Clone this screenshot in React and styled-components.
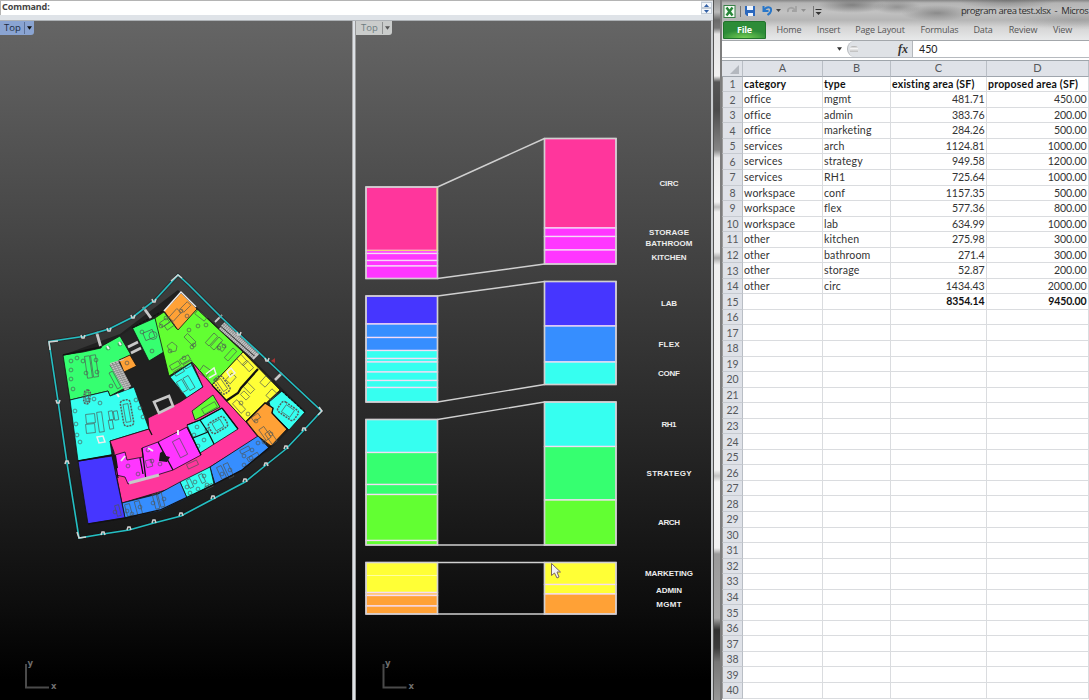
import React from 'react';
import styled, { createGlobalStyle } from 'styled-components';

const Global = createGlobalStyle`
  * { box-sizing: border-box; }
  body { margin: 0; overflow: hidden; background: #000; }
`;

const Desktop = styled.div`
  display: flex;
  width: 1089px;
  height: 700px;
  overflow: hidden;
  font-family: 'Open Sans', sans-serif;
`;

const Modeler = styled.section`
  display: flex;
  flex-direction: column;
  width: 713px;
  flex: none;
  background: #dfe3e8;
`;

const CommandBar = styled.div`
  display: flex;
  justify-content: space-between;
  height: 15px;
  border-top: 1px solid #b4b4b4;
  border-left: 1px solid #b4b4b4;
  background: #fff;
  font: bold 9px/11px 'Noto Sans', sans-serif;
  letter-spacing: -0.1px;
  color: #444;
  padding-left: 1px;
`;

const Spinner = styled.div`
  display: flex;
  flex-direction: column;
  justify-content: space-between;
  width: 12px;
  height: 14px;
  padding: 1px 1px 1px 0;
  background: #e4e8ed;
`;

const SpinButton = styled.div`
  display: flex;
  align-items: center;
  justify-content: center;
  height: 6px;
  border: 1px solid #c3ccd6;
  background: #f3f6fa;
`;

const Viewports = styled.div`
  display: flex;
  flex: 1;
  margin-top: 5px;
  border-top: 1px solid #aeb2b6;
  border-right: 2px solid #c9cccf;
`;

const Viewport = styled.div`
  display: flex;
  flex-direction: column;
  width: ${(p) => p.$width}px;
  height: 679px;
  background: linear-gradient(#656565, #4b4b4b 26%, #2e2e2e 54%, #0e0e0e 85%, #000 97%);
`;

const Splitter = styled.div`
  width: 4px;
  border-left: 1px solid #aaa;
  border-right: 1px solid #9a9a9a;
  background: #dde1e6;
`;

const ViewTab = styled.div`
  display: flex;
  align-items: center;
  justify-content: space-between;
  width: ${(p) => p.$width}px;
  height: 14px;
  flex: none;
  padding: 0 2px 0 ${(p) => (p.$active ? 4 : 5)}px;
  border-radius: 0 0 3px 0;
  background: ${(p) => (p.$active ? '#8aa4d2' : '#cacccb')};
  color: ${(p) => (p.$active ? '#1c2c42' : '#6d7c80')};
  font: 9.5px/14px 'Open Sans', sans-serif;
`;

const TabArrow = styled.span`
  display: flex;
  align-items: center;
  height: 12px;
  padding-left: 2px;
  border-left: 1px solid ${(p) => (p.$active ? '#5d7298' : '#8f9191')};
`;

const Canvas = styled.svg`
  display: block;
  flex: none;
`;

const Gap = styled.div`
  width: 9px;
  flex: none;
  border-left: 1px solid #555;
  border-right: 2px solid #7d7d7d;
  background: linear-gradient(
    #999 0, #bbb 12px, #6a6a6a 20px, #777 28px, #e4e4e4 34px, #f1f1f1 76px,
    #555 82px, #4b4b4b 110px, #868686 150px, #e9e9e9 158px, #f3f3f3 202px,
    #bdbdbd 207px, #f0f0f0 212px, #eee 252px, #a8a8a8 258px, #f0f0f0 265px,
    #f2f2f2 470px, #c2c2c2 476px, #f4f4f4 482px, #f2f2f2 548px, #9a9a9a 554px,
    #a9a9a9 618px, #303030 630px, #3c3c3c 648px, #777 662px, #999 700px
  );
`;

const Workbook = styled.section`
  display: flex;
  flex-direction: column;
  flex: 1;
  min-width: 0;
  background: #fff;
`;

const Frost = styled.div`
  display: flex;
  flex-direction: column;
  height: 40px;
  flex: none;
  background:
    radial-gradient(ellipse 34px 8px at 130px 5px, #666a 0, #6660 100%),
    radial-gradient(ellipse 24px 7px at 175px 7px, #6667 0, #6660 100%),
    radial-gradient(ellipse 36px 8px at 215px 13px, #6669 0, #6660 100%),
    radial-gradient(ellipse 50px 9px at 285px 0px, #6668 0, #6660 100%),
    radial-gradient(ellipse 70px 10px at 355px 20px, #8886 0, #8880 100%),
    linear-gradient(#858585 0, #b4b4b4 3px, #c2c2c2 12px, #b5b5b5 20px, #d4d4d4 27px, #e8e9ea 40px);
`;

const TitleRow = styled.div`
  display: flex;
  align-items: center;
  height: 21px;
  padding-left: 1px;
`;

const Title = styled.span`
  margin-left: auto;
  width: 128px;
  flex: none;
  white-space: nowrap;
  font: 9.5px/20px 'Open Sans', sans-serif;
  color: #2d2d2d;
  letter-spacing: -0.44px;
`;

const RibbonTabs = styled.div`
  display: flex;
  height: 19px;
  align-items: stretch;
`;

const FileTab = styled.div`
  width: 43px;
  margin-left: 1px;
  height: 18px;
  border-radius: 2px 2px 0 0;
  border: 1px solid #20742b;
  background: radial-gradient(ellipse 24px 8px at 50% 100%, #75cf55, #2d8c38 100%);
  color: #fff;
  font: bold 9px/16px 'Open Sans', sans-serif;
  letter-spacing: -0.2px;
  text-align: center;
`;

const RibbonTab = styled.div`
  width: ${(p) => p.$width}px;
  text-align: center;
  white-space: nowrap;
  font: 9px/18px 'Open Sans', sans-serif;
  letter-spacing: -0.14px;
  color: #555;
`;

const FormulaBar = styled.div`
  display: flex;
  height: 18px;
  flex: none;
  border-top: 1px solid #a3a7ab;
  border-bottom: 1px solid #b6babf;
  background: #fff;
`;

const NameBox = styled.div`
  display: flex;
  align-items: center;
  justify-content: flex-end;
  width: 125px;
  padding-right: 5px;
`;

const FunctionArea = styled.div`
  display: flex;
  align-items: center;
  justify-content: space-between;
  width: 66px;
  padding: 0 4px 0 2px;
  border: 1px solid #b4b8bc;
  border-width: 0 1px 0 1px;
  border-radius: 9px 0 0 9px;
  background: #dfe2e6;
  font: italic bold 12px/14px 'Liberation Serif', serif;
  color: #333;
`;

const Knob = styled.span`
  width: 8px;
  height: 6px;
  border-radius: 3px 3px 0 0;
  background: linear-gradient(#aaa, #f6f6f6 40%, #bbb);
`;

const FormulaValue = styled.div`
  padding-left: 6px;
  font: 10.6px/16px 'Lato', sans-serif;
  color: #222;
`;

const Sheet = styled.div`
  display: grid;
  grid-template-columns: 21px 80px 68px 96px 102px;
  grid-template-rows: 15.7px repeat(40, 15.55px);
  margin-top: 2px;
  border-top: 1px solid #9fa5ab;
  width: 367px;
  background: #fff;
`;

const HeadCell = styled.div`
  display: flex;
  align-items: center;
  justify-content: center;
  border-right: 1px solid #b9bec5;
  border-bottom: 1px solid ${(p) => (p.$row ? '#c6cad0' : '#9fa5ad')};
  border-left: ${(p) => (p.$row ? '1px solid #9b9b9b' : '0')};
  background: #dfe2e8;
  color: #55585c;
  font: ${(p) => (p.$row ? 10.5 : 11)}px/14px 'Lato', sans-serif;
`;

const Cell = styled.div`
  min-width: 0;
  overflow: visible;
  white-space: nowrap;
  padding: 0 ${(p) => (p.$number ? 1.5 : 0)}px 0 1px;
  border-right: 1px solid #dadcdf;
  border-bottom: 1px solid #dadcdf;
  text-align: ${(p) => (p.$number ? 'right' : 'left')};
  font: ${(p) => (p.$bold ? 'bold 10.5px' : '10.6px')}/${(p) => (p.$bold ? 15 : 14)}px 'Lato', sans-serif;
  letter-spacing: ${(p) => (p.$number ? -0.1 : p.$bold ? 0.2 : 0.15)}px;
  color: ${(p) => (p.$bold ? '#111' : '#333')};
`;

const ROWS = [
  ['category', 'type', 'existing area (SF)', 'proposed area (SF)'],
  ['office', 'mgmt', '481.71', '450.00'],
  ['office', 'admin', '383.76', '200.00'],
  ['office', 'marketing', '284.26', '500.00'],
  ['services', 'arch', '1124.81', '1000.00'],
  ['services', 'strategy', '949.58', '1200.00'],
  ['services', 'RH1', '725.64', '1000.00'],
  ['workspace', 'conf', '1157.35', '500.00'],
  ['workspace', 'flex', '577.36', '800.00'],
  ['workspace', 'lab', '634.99', '1000.00'],
  ['other', 'kitchen', '275.98', '300.00'],
  ['other', 'bathroom', '271.4', '300.00'],
  ['other', 'storage', '52.87', '200.00'],
  ['other', 'circ', '1434.43', '2000.00'],
  ['', '', '8354.14', '9450.00'],
];

const C = {
  pink: '#ff369c', magenta: '#ff36ff', indigo: '#4636ff', blue: '#368eff',
  cyan: '#36fff0', green: '#36ff70', lime: '#62ff32', yellow: '#ffff36', orange: '#ffa136',
};

const ROOMS = [
  [C.green, '63,355 83,352 101,348 102,346 120,336 131,355 110,365 125,388 110,396 108,391 70,400'],
  [C.cyan, '70,400 108,391 110,396 134,387 149,429 110,441 112,455 78,461'],
  [C.green, '132.5,328 155,318 167,350 149,361'],
  [C.lime, '155,318 164,312 177,329 197,309 243,352 212,385 192,362 169,376'],
  [C.orange, '164,311 181,293 197,309 178,330'],
  [C.orange, '119,360 130,355 136.5,366 124,372'],
  [C.cyan, '170,377 191,363 203,387 187,398'],
  [C.pink, '192,362 212,385 246,422 258,437 210,467 176,487 122,503 117,478 114,452 110,441 149,429 148,418 180,402 203,387'],
  [C.yellow, '243,352 280,390 246,422 212,385'],
  [C.cyan, '282,391 305,412 289,430 272,413 269,402'],
  [C.orange, '246,421 265,402.5 273,408 272,413 287,429 271,446 258,436'],
  [C.blue, '258,436 269,448 242,470 215,484 210,467'],
  [C.cyan, '180,482 210,467 214,484 187,498'],
  [C.blue, '122,503 158,494 180,482 187,498 160,511 125,518'],
  [C.indigo, '78,461 112,456 125,518 88,524'],
  [C.magenta, '115,455 125,452 127,460 143,457 142,448 158,442 187,427 201,455 173,470 128,484 125,477 116,475'],
  [C.cyan, '187,425 200,420 222,408 238,429 200,453 193,438'],
  [C.lime, '192,411 213,395 220,407 195,420'],
];

/* x, y, width, height, rotation of desks and tables */
const DESKS = [
  [86, 356, 5, 22, -8], [92, 355, 5, 22, -8], [113, 371, 4, 18, -28],
  [86, 414, 9, 9, -6], [86, 424, 9, 9, -6], [98, 412, 5, 20, -8], [109, 411, 4, 9, -10], [114, 411, 4, 9, -10], [109, 420, 4, 9, -10],
  [144, 331, 10, 8, -22], [160, 320, 9, 5, -35], [165, 323, 9, 5, -35],
  [170, 363, 10, 5, -30], [180, 357, 10, 5, -30], [174, 369, 10, 5, -30], [184, 362, 9, 5, -30],
  [195, 313, 12, 5, 38], [184, 337, 12, 5, 45], [209, 333, 5, 13, 42], [214, 337, 5, 13, 42], [228, 348, 5, 13, 42],
  [200, 367, 9, 9, 35], [218, 344, 7, 6, 40], [183, 302, 5, 10, 45], [172, 309, 6, 12, 42],
  [239, 355, 6, 10, -42], [245, 361, 6, 10, -42], [228, 374, 6, 9, 42], [262, 377, 7, 9, 42], [268, 390, 7, 9, 42], [244, 385, 10, 6, 45],
  [236, 400, 6, 13, -42], [241, 393, 8, 5, 45], [262, 427, 6, 13, -35], [268, 431, 6, 13, -35], [252, 415, 8, 5, -35],
  [176, 439, 8, 18, -27], [186, 376, 6, 14, -30], [179, 380, 6, 12, -30], [187, 462, 11, 5, -25], [146, 460, 6, 7, -15],
  [202, 405, 15, 6, -30], [240, 448, 10, 4, -28], [247, 455, 12, 4, -30], [226, 463, 5, 15, -25], [219, 466, 5, 13, -25],
  [126, 504, 5, 12, -15], [136, 501, 5, 14, -15], [154, 494, 4, 15, -15], [159, 492, 4, 15, -15], [116, 505, 4, 11, -15],
  [188, 479, 4, 9, -25], [200, 474, 4, 9, -25], [205, 485, 8, 3, -25],
];

const CHAIRS = [
  [71, 361], [77, 358], [83, 361], [96, 360], [71, 370], [71, 379], [73, 389], [86, 373], [97, 372], [111, 386], [108, 348], [120, 344],
  [142, 332], [152, 351], [161, 326], [166, 318], [170, 351], [184, 358], [192, 347], [181, 311], [187, 316], [127, 363],
  [189, 330], [198, 326], [206, 325], [219, 348], [224, 346], [194, 345], [241, 403], [248, 414], [256, 421], [271, 434], [264, 442],
  [75, 411], [76, 424], [77, 435], [80, 442], [88, 400], [94, 399], [100, 403], [136, 400], [140, 408], [143, 417],
  [128, 466], [138, 474], [152, 461], [148, 450], [160, 464], [207, 430], [197, 427], [204, 440], [198, 446], [194, 435],
  [187, 487], [195, 482], [204, 476], [190, 493], [198, 489], [207, 485], [222, 474], [230, 470], [244, 456], [252, 450], [258, 443], [244, 465], [251, 458],
  [115, 512], [127, 511], [140, 507], [153, 503], [164, 499], [132, 514],
];

const TABLES = [[127, 413, 5, 13, -10], [87, 397, 3, 7, 5], [222, 385, 5, 9, -35], [218, 425, 9, 6, -30], [288, 411, 10, 6, 35]];
const POSTS = [[83, 336], [109, 329], [133, 316], [154, 300], [58, 401], [67, 463], [103, 534], [129, 529], [154, 522], [181, 515], [213, 498], [245, 481], [266, 465], [286, 448], [304, 430], [239, 333], [267, 359]];

const OUTLINE = 'M49 341.5L83 336.5L109 329L133 317L155 300L178 275L189 285L221 317L239 334L282 374L321.5 411L304 430L286 449L266 465L245 482L213 499L181 516L154 523L129 530L103 534L79 538L67 463L58 401Z';

function Axis({ x }) {
  return (
    <g fill="#6f6f6f" fontFamily="DejaVu Sans" fontWeight="bold" fontSize="8.5">
      <path d={`M${x} 664v23.500h23`} fill="none" stroke="#4a4a4a" strokeWidth="2" />
      <text x={x + 1.5} y="666">y</text>
      <text x={x + 25} y="689">x</text>
    </g>
  );
}

function FloorPlan() {
  return (
    <Canvas width="352" height="665" viewBox="0 35 352 665">
      <polygon points="63,355 120,334 178,290 243,350 306,412 270,450 215,486 160,512 88,525" fill="#202020" />
      <g stroke="#111" strokeWidth="0.8">
        {ROOMS.map(([fill, points]) => <polygon key={points} points={points} fill={fill} />)}
      </g>
      <g fill="none" stroke="#4d5553" strokeWidth="0.65">
        {DESKS.map(([x, y, w, h, r]) => (
          <rect key={`${x}-${y}`} x={x} y={y} width={w} height={h} transform={`rotate(${r} ${x + w / 2} ${y + h / 2})`} />
        ))}
        {CHAIRS.map(([x, y]) => <circle key={`${x}-${y}`} cx={x} cy={y} r="1.9" />)}
        <circle cx="153" cy="335.5" r="4" />
        <path d="M167 346l5-4 5 4-1 5-5 1z" />
      </g>
      {TABLES.map(([x, y, rx, ry, r]) => (
        <g key={x} fill="none" stroke="#555d5b" transform={`rotate(${r} ${x} ${y})`}>
          <rect x={x - rx} y={y - ry} width={rx * 2} height={ry * 2} rx="3" strokeWidth="1.5" strokeDasharray="2 1" />
          <rect x={x - rx / 2} y={y - ry * 0.7} width={rx} height={ry * 1.4} strokeWidth="0.7" />
        </g>
      ))}
      <g fill="none" stroke="#111" strokeWidth="1.3">
        <path d="M63 355l38-8M212 385l14 15M246 422l19-19 8 5-1 5 16 17M187 425l13-5 22-12M200 420l8 12M193 438l15-6 6 12M222 408l16 21M187 427l14 28M149 429l3 6M142 448l4 32M158 442l15 28M140 458l3 16M114 455l4 23M78 461l34-6M88 524l37-6 35-8 55-26 27-14 29-24" />
        <path d="M226 401l12-8 3-5 17-19" strokeWidth="2.2" />
        <path d="M132 328l31-17M282 391l23 21" strokeDasharray="3 1" />
      </g>
      <g fill="#181818">
        <polygon points="160,453 163,451 166,456 170,457 167,462 159,461" />
        <polygon points="112,456 116,455 118,468 115,469" />
        <polygon points="120,336 132,328 142,350 131,355" fill="#252525" />
      </g>
      <g stroke="#c8c8c8" fill="none">
        <path d="M154 402l15-6 4 10-14 7z" strokeWidth="2.6" />
        <path d="M110 363.500l14-4" />
        <path d="M111 364l15 26M114 363l14 26M117 362l13 25" strokeWidth="3" stroke="#8d8d8d" />
        <path d="M111 364l15 26M114 363l14 26M117 362l13 25" strokeWidth="2.2" strokeDasharray="1.2 1" />
        <path d="M222 325l34 30M220 328l34 30M224 323l34 31" strokeWidth="3" stroke="#858585" />
        <path d="M222 325l34 30M220 328l34 30M224 323l34 31" strokeWidth="2.3" strokeDasharray="1.3 0.7" />
        <path d="M215 322l7-7M259 353l-6 6" strokeWidth="1.8" />
        <path d="M128 347l10-5M131 353l10-5M96.500 332l4 14M143 307l8 11" strokeWidth="2.8" />
        <path d="M282 373l-7 7" strokeWidth="2.6" />
        <path d="M129 483l30-8" strokeWidth="3" />
        <path d="M164 311l17-19 15 15M97 437l6-1 2 6-6 1zM206 374l8-6 2 6-7 4M227 372l4-4 4 5-5 4z" strokeWidth="1.5" stroke="#eee" />
        <path d="M107 346l2 3M119 342l2 3M117 394l2 3M178 430l0 5M148 448l5 3M125 456l-4 5" strokeWidth="2" stroke="#eee" />
      </g>
      <path d={OUTLINE} fill="none" stroke="#1115" strokeWidth="3.5" />
      <path d={OUTLINE} fill="none" stroke="#24bfc3" strokeWidth="1.6" />
      <g fill="none" stroke="#d2d2d2" strokeWidth="1.5">
        {POSTS.map(([x, y]) => {
          const dir = y > 420 ? -1 : 1;
          return <path key={`${x}-${y}`} d={`M${x - 2} ${y - dir}l1 ${3 * dir}h2l1 ${-3 * dir}`} />;
        })}
        <path d="M50 350l-1-8 9-1M171 281l7-6 4 3M319 407l3 4-4 4M77 532l2 6 7-1" />
      </g>
      <path d="M271 361l4-3v5z" fill="#a33" />
      <Axis x={26} />
    </Canvas>
  );
}

const GROUPS = [
  { left: [[187, C.pink], [250.5, C.magenta], [253.5, C.magenta], [260.5, C.magenta], [266, C.magenta]], leftEnd: 278.5,
    right: [[138.5, C.pink], [228, C.magenta], [236.5, C.magenta], [250, C.magenta]], rightEnd: 264 },
  { left: [[296, C.indigo], [324, C.blue], [337.5, C.blue], [350.5, C.cyan], [358.5, C.cyan], [362, C.cyan], [372, C.cyan], [380.5, C.cyan], [387.5, C.cyan]], leftEnd: 402,
    right: [[281.5, C.indigo], [326, C.blue], [362, C.cyan]], rightEnd: 384.5 },
  { left: [[419.5, C.cyan], [452.5, C.green], [484.5, C.green], [494.5, C.lime], [540.5, C.lime]], leftEnd: 545,
    right: [[402, C.cyan], [446.5, C.green], [500, C.lime]], rightEnd: 545 },
  { left: [[562.5, C.yellow], [592.5, '#ffc36a'], [595.5, C.orange], [606, C.orange]], leftEnd: 614,
    right: [[562.5, C.yellow], [584.5, C.yellow], [594, C.orange]], rightEnd: 614 },
];

const LABELS = [
  ['CIRC', 183, 19], ['STORAGE', 232, 40], ['BATHROOM', 243, 47], ['KITCHEN', 257, 35], ['LAB', 303.5, 16], ['FLEX', 344, 21], ['CONF', 373, 22],
  ['RH1', 424, 15], ['STRATEGY', 473, 45], ['ARCH', 522, 22], ['MARKETING', 573.5, 48], ['ADMIN', 590, 26], ['MGMT', 604, 25.5],
];

function Stack({ x, parts, end }) {
  const top = parts[0][0];
  return (
    <g>
      {parts.map(([y, fill], i) => {
        const next = i + 1 < parts.length ? parts[i + 1][0] : end;
        return <rect key={y} x={x} y={y} width="71.5" height={next - y} fill={fill} stroke="#f5dcf5" strokeWidth="1.3" />;
      })}
      <rect x={x} y={top} width="71.5" height={end - top} fill="none" stroke="#d0d0d0" strokeWidth="1.4" />
    </g>
  );
}

function AreaChart() {
  return (
    <Canvas width="355" height="665" viewBox="356 35 355 665">
      {GROUPS.map((g) => (
        <g key={g.leftEnd}>
          <path d={`M437.5 ${g.left[0][0]}L544.5 ${g.right[0][0]}M437.5 ${g.leftEnd}L544.5 ${g.rightEnd}`} stroke="#d0d0d0" strokeWidth="1.4" />
          <Stack x={366} parts={g.left} end={g.leftEnd} />
          <Stack x={544.5} parts={g.right} end={g.rightEnd} />
        </g>
      ))}
      <path d="M367 575.5h70" stroke="#ffffa0" />
      <path d="M367 250.500h70V188" stroke="#f2d27a" fill="none" />
      <g fill="#ececec" fontFamily="Liberation Sans" fontWeight="bold" fontSize="8" textAnchor="middle">
        {LABELS.map(([t, y, w]) => <text key={t} x="669" y={y + 2.5} textLength={w}>{t}</text>)}
      </g>
      <path d="M551.5 563.5v12l3-2.5 2.5 5 2-1-2-5h3.5z" fill="#f2f2f2" stroke="#7b665c" strokeWidth="1" />
      <Axis x={383.5} />
    </Canvas>
  );
}

const Down = ({ color = '#333', size = 5 }) => (
  <svg width={size} height="4" viewBox="0 0 6 4"><path d="M0 0h6L3 4z" fill={color} /></svg>
);

function QuickAccess() {
  return (
    <svg width="102" height="20" viewBox="0 0 102 20">
      <rect x="1" y="4.500" width="11" height="12" fill="#f4faf3" stroke="#398148" />
      <path d="M3.5 6.500l6 8M9.500 6.500l-6 8" stroke="#278638" strokeWidth="2.4" />
      <path d="M17.500 5v11" stroke="#777" />
      <path d="M22 5h10v10H24l-2-2z" fill="#2c68bd" />
      <path d="M24 5h6v4h-6zM25 12h5v3h-5z" fill="#eef5ff" />
      <path d="M40.500 5v5h5M41 9.500C43 5 49 5 48 10c-.4 2-2 3-3.500 4" fill="none" stroke="#2977c9" strokeWidth="2" />
      <path d="M53 8h5l-2.500 3z" fill="#444" />
      <path d="M73 5v5h-4M72 9c-3-4-8-2-7 2" fill="none" stroke="#a2a2a2" strokeWidth="1.8" />
      <path d="M78 8h5l-2.500 3z" fill="#909090" />
      <path d="M90.500 5v11" stroke="#777" />
      <path d="M92.500 8.500h6" stroke="#333" />
      <path d="M92.500 11h6l-3 3z" fill="#333" />
    </svg>
  );
}

const TABS = [['Home', 46], ['Insert', 33], ['Page Layout', 70], ['Formulas', 49], ['Data', 38], ['Review', 42], ['View', 37]];

export default function App() {
  return (
    <Desktop>
      <Global />
      <Modeler>
        <CommandBar>
          Command:
          <Spinner>
            <SpinButton><svg width="5" height="3"><path d="M0 3L2.500 0 5 3z" fill="#315fa5" /></svg></SpinButton>
            <SpinButton><svg width="5" height="3"><path d="M0 0L2.500 3 5 0z" fill="#315fa5" /></svg></SpinButton>
          </Spinner>
        </CommandBar>
        <Viewports>
          <Viewport $width={352}>
            <ViewTab $active $width={34}>Top<TabArrow $active><Down color="#111" /></TabArrow></ViewTab>
            <FloorPlan />
          </Viewport>
          <Splitter />
          <Viewport $width={355}>
            <ViewTab $width={36}>Top<TabArrow><Down color="#555" /></TabArrow></ViewTab>
            <AreaChart />
          </Viewport>
        </Viewports>
      </Modeler>
      <Gap />
      <Workbook>
        <Frost>
          <TitleRow><QuickAccess /><Title>program area test.xlsx&nbsp; -&nbsp; Micros</Title></TitleRow>
          <RibbonTabs>
            <FileTab>File</FileTab>
            {TABS.map(([t, w]) => <RibbonTab key={t} $width={w}>{t}</RibbonTab>)}
          </RibbonTabs>
        </Frost>
        <FormulaBar>
          <NameBox><Down /></NameBox>
          <FunctionArea><Knob /><span>fx</span></FunctionArea>
          <FormulaValue>450</FormulaValue>
        </FormulaBar>
        <Sheet>
          <HeadCell><svg width="18" height="13"><path d="M16 3v9H7z" fill="#b4b8bf" /></svg></HeadCell>
          {['A', 'B', 'C', 'D'].map((c) => <HeadCell key={c}>{c}</HeadCell>)}
          {Array.from({ length: 40 }, (_, i) => {
            const row = ROWS[i] || ['', '', '', ''];
            return (
              <React.Fragment key={i}>
                <HeadCell $row>{i + 1}</HeadCell>
                {row.map((v, j) => (
                  <Cell key={j} $number={i > 0 && j > 1} $bold={i === 0 || i === 14}>{v}</Cell>
                ))}
              </React.Fragment>
            );
          })}
        </Sheet>
      </Workbook>
    </Desktop>
  );
}
